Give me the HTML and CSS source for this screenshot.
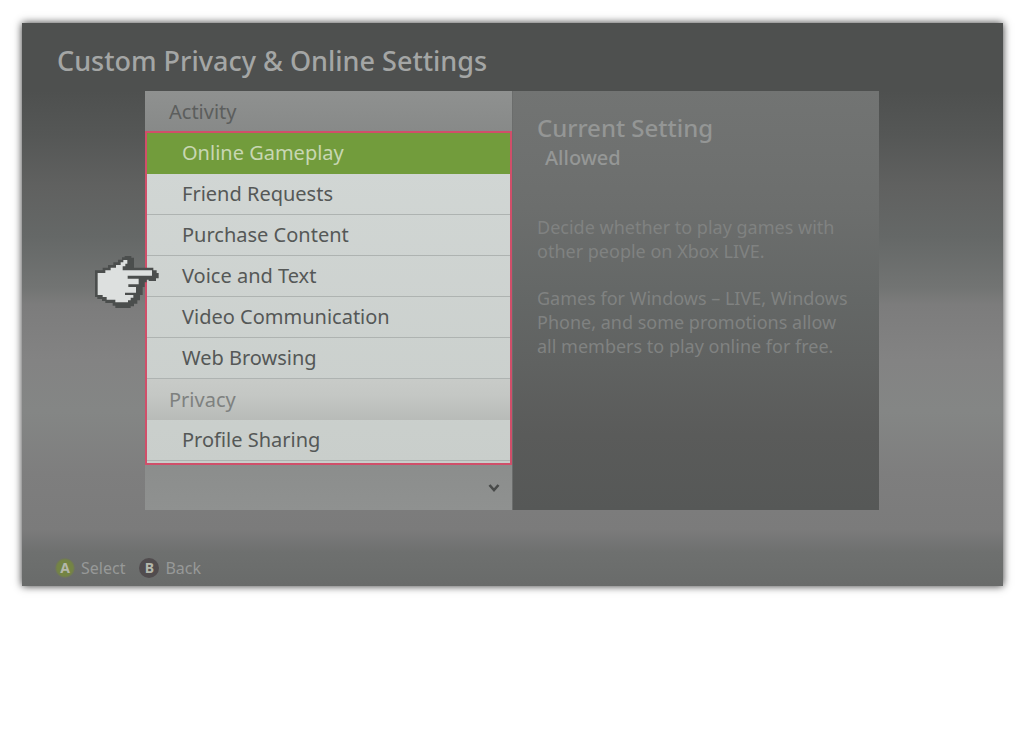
FILE: index.html
```html
<!DOCTYPE html>
<html lang="en">
<head>
  <meta charset="UTF-8" />
  <meta name="viewport" content="width=device-width, initial-scale=1.0"/>
  <title>Custom Privacy &amp; Online Settings</title>
  <link rel="stylesheet" href="styles.css">
</head>
<body>

<main class="screen">
  <h1>Custom Privacy &amp; Online Settings</h1>

  <div class="panels">
    <nav class="menu" aria-label="Settings">
      <h2 class="group">Activity</h2>
      <div class="highlight">
        <button type="button" class="item selected">Online Gameplay</button>
        <button type="button" class="item">Friend Requests</button>
        <button type="button" class="item">Purchase Content</button>
        <button type="button" class="item">Voice and Text</button>
        <button type="button" class="item">Video Communication</button>
        <button type="button" class="item">Web Browsing</button>
        <h2 class="group privacy">Privacy</h2>
        <button type="button" class="item">Profile Sharing</button>
      </div>
      <div class="more">
        <svg width="12" height="10" viewBox="0 0 12 10"><path d="M1.500 2L6 7L10.500 2" fill="none" stroke="#484a49" stroke-width="2.600"/></svg>
      </div>

      <!-- pointing hand -->
      <svg class="hand" viewBox="45 33 192 156">
        <path fill="#4b4e4d" d="M45 76H68V68H84V60H100V52H114V44H126V37H134V33H154V38H162V68H220V76H230V84H236V100H228V108H206V104H200V112H194V126H188V150H180V166H172V176H162V184H152V189H106V182H98V174H76V168H66V162H52V156H45Z"/>
        <path fill="#dde0df" d="M53 84H76V76H92V68H108V60H122V52H130V45H142V56H136V64H128V76H216V92H143V101H176V118H145V126H168V143H135V150H160V158H152V166H144V172H106V164H80V156H68V150H53Z"/>
      </svg>
    </nav>

    <section class="details">
      <h2>Current Setting</h2>
      <strong>Allowed</strong>
      <p>Decide whether to play games with<br>other people on Xbox LIVE.</p>
      <p>Games for Windows – LIVE, Windows<br>Phone, and some promotions allow<br>all members to play online for free.</p>
    </section>
  </div>

  <footer>
    <button type="button" class="action"><span class="pad a">A</span>Select</button>
    <button type="button" class="action"><span class="pad b">B</span>Back</button>
  </footer>
</main>

</body>
</html>
```
FILE: styles.css
```css
* {
  box-sizing: border-box;
}
body {
  margin: 0;
  min-height: 100vh;
  padding: 23px 21px 20px 22px;
  background: #fff;
  font-family: "Noto Sans", "Open Sans", sans-serif;
}
h1, h2, p {
  margin: 0;
  font-weight: 500;
}
button {
  border: none;
  background: none;
  font: inherit;
  cursor: pointer;
}
.screen {
  padding: 20px 0 6px;
  background: linear-gradient(#4e504f 0%, #4e504f 12%, #555756 20%, #606160 29%, #656867 38%, #727473 47%, #7c7c7c 50%, #838383 60%, #848685 69%, #7e7e7e 80%, #7b7b7b 90%, #6e706f 94%, #696b6a 100%);
  box-shadow: 0 0 8px rgba(0, 0, 0, 0.8);
}
h1 {
  padding-left: 35px;
  font-size: 27px;
  line-height: 36px;
  color: #a4a6a5;
}
.panels {
  display: grid;
  grid-template-columns: 1fr 1fr;
  margin: 12px 124px 0 123px;
}
.menu {
  position: relative;
  background: linear-gradient(#8f9190 0%, #878988 10%, #8b8d8c 88%, #8f9190 100%);
}
.group {
  height: 40px;
  padding-left: 24px;
  font-size: 20px;
  line-height: 42px;
  font-weight: 400;
  color: #5c5e5d;
}
.highlight {
  display: flex;
  flex-direction: column;
  padding-bottom: 2px;
  border: 2px solid #d04f6a;
  background: linear-gradient(#d2d7d5, #c9cecb);
}
.item {
  height: 41px;
  padding: 0 0 0 35px;
  border-bottom: 1px solid #aeb3b1;
  font-size: 20px;
  line-height: 40px;
  text-align: left;
  color: #555857;
}
.item.selected {
  border-color: #729c3c;
  background: #729c3c;
  color: #c8d7b3;
}
.privacy {
  height: 41px;
  padding-left: 22px;
  background: linear-gradient(#c8cbc8, #c4c7c4 40%, #b8bbb8);
  color: #7e817f;
}
.more {
  display: flex;
  justify-content: flex-end;
  align-items: center;
  height: 45px;
  padding-right: 12px;
}
.hand {
  position: absolute;
  top: 165px;
  left: -50px;
  width: 64px;
  height: 52px;
}
.details {
  padding: 20px 24px 0;
  border-left: 1px solid #6b6d6c;
  background: linear-gradient(#727473 0%, #6c6e6d 28%, #646766 50%, #606261 65%, #5a5b5a 82%, #565857 100%);
  color: #808281;
}
.details h2 {
  font-size: 24px;
  line-height: 34px;
  color: #949695;
}
.details strong {
  display: block;
  padding-left: 8px;
  margin-bottom: 44px;
  font-size: 20px;
  line-height: 26px;
  font-weight: 500;
  color: #959796;
}
.details p {
  margin-bottom: 23px;
  font-size: 18px;
  line-height: 24px;
  font-weight: 400;
  white-space: nowrap;
}
footer {
  display: flex;
  gap: 14px;
  padding: 46px 0 0 33px;
}
.action {
  display: flex;
  align-items: center;
  gap: 6px;
  padding: 0;
  font-size: 16px;
  line-height: 24px;
  color: #979998;
}
.pad {
  width: 20px;
  height: 20px;
  border-radius: 50%;
  font-size: 14px;
  line-height: 20px;
  font-weight: 700;
  text-align: center;
  color: #b4b8ac;
}
.a {
  background: radial-gradient(circle, #748444 55%, #6d7064 72%);
}
.b {
  background: #514c4e;
}
```
